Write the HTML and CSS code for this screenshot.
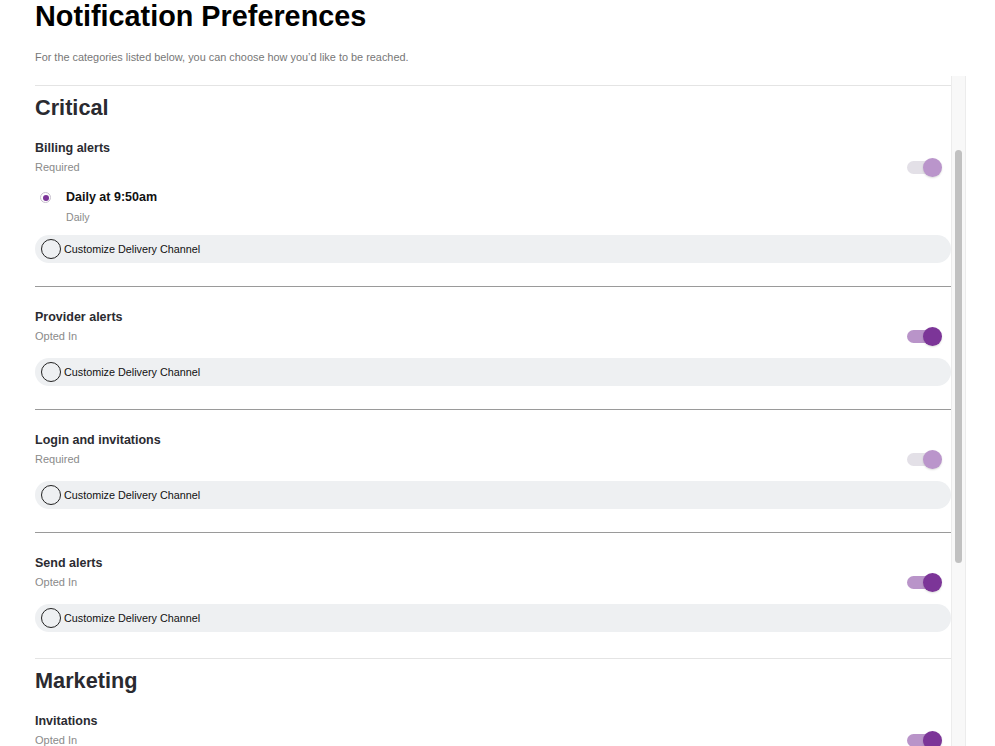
FILE: index.html
```html
<!DOCTYPE html>
<html lang="en">
<head>
    <meta charset="UTF-8">
    <meta name="viewport" content="width=device-width, initial-scale=1.0">
    <title>Notification Preferences</title>
    <link rel="stylesheet" href="styles.css">
</head>
<body>
    <h1>Notification Preferences</h1>
    <p class="intro">For the categories listed below, you can choose how you’d like to be reached.</p>

    <div class="panel">
        <div class="panel-body">
            <section class="category">
                <h2>Critical</h2>

                <div class="pref">
                    <div class="pref-head">
                        <div>
                            <div class="pref-title">Billing alerts</div>
                            <div class="pref-status">Required</div>
                        </div>
                        <span class="toggle disabled"><span class="toggle-thumb"></span></span>
                    </div>
                    <div class="schedule">
                        <span class="radio checked"></span>
                        <div>
                            <div class="schedule-title">Daily at 9:50am</div>
                            <div class="schedule-sub">Daily</div>
                        </div>
                    </div>
                    <div class="channel"><span class="channel-circle"></span>Customize Delivery Channel</div>
                </div>

                <div class="pref">
                    <div class="pref-head">
                        <div>
                            <div class="pref-title">Provider alerts</div>
                            <div class="pref-status">Opted In</div>
                        </div>
                        <span class="toggle"><span class="toggle-thumb"></span></span>
                    </div>
                    <div class="channel"><span class="channel-circle"></span>Customize Delivery Channel</div>
                </div>

                <div class="pref">
                    <div class="pref-head">
                        <div>
                            <div class="pref-title">Login and invitations</div>
                            <div class="pref-status">Required</div>
                        </div>
                        <span class="toggle disabled"><span class="toggle-thumb"></span></span>
                    </div>
                    <div class="channel"><span class="channel-circle"></span>Customize Delivery Channel</div>
                </div>

                <div class="pref">
                    <div class="pref-head">
                        <div>
                            <div class="pref-title">Send alerts</div>
                            <div class="pref-status">Opted In</div>
                        </div>
                        <span class="toggle"><span class="toggle-thumb"></span></span>
                    </div>
                    <div class="channel"><span class="channel-circle"></span>Customize Delivery Channel</div>
                </div>
            </section>

            <section class="category">
                <h2>Marketing</h2>

                <div class="pref">
                    <div class="pref-head">
                        <div>
                            <div class="pref-title">Invitations</div>
                            <div class="pref-status">Opted In</div>
                        </div>
                        <span class="toggle"><span class="toggle-thumb"></span></span>
                    </div>
                    <div class="channel"><span class="channel-circle"></span>Customize Delivery Channel</div>
                </div>
            </section>
        </div>
        <div class="scrollbar"><div class="scrollbar-thumb"></div></div>
    </div>
</body>
</html>
```

FILE: styles.css
```css
html, body {
    height: 100%;
}
body {
    font-family: "Liberation Sans", Arial, sans-serif;
    margin: 0;
    padding: 0 29px 0 35px;
    color: #2b2b31;
    background: #fff;
    overflow: hidden;
}
h1 {
    margin: 0;
    font-size: 28.8px;
    line-height: 32px;
    color: #000;
}
.intro {
    margin: 18px 0 0;
    font-size: 10.9px;
    line-height: 14px;
    color: #777;
}
.panel {
    display: flex;
    margin-top: 12px;
    height: 670px;
}
.panel-body {
    flex: 1;
    padding-top: 9px;
    overflow: hidden;
}
.category {
    border-top: 1px solid #e4e4e4;
    padding: 9px 0 3px;
}
h2 {
    margin: 0;
    font-size: 21.7px;
    line-height: 26px;
    color: #2a2a30;
}
.pref {
    border-top: 1px solid #9a9a9a;
    padding: 22px 0 23px;
}
.category h2 + .pref {
    border-top: none;
    padding-top: 19px;
}
.pref-head {
    display: flex;
    justify-content: space-between;
    align-items: flex-end;
}
.pref-title {
    font-size: 12.5px;
    line-height: 16px;
    font-weight: bold;
}
.pref-status {
    margin-top: 4px;
    font-size: 11px;
    line-height: 14px;
    color: #8a8a8a;
}
.toggle {
    position: relative;
    width: 35px;
    height: 14px;
    margin-right: 9px;
}
.toggle::before {
    content: "";
    display: block;
    width: 30px;
    height: 13px;
    margin-top: 1px;
    border-radius: 7px;
    background: #b994c9;
}
.toggle-thumb {
    position: absolute;
    top: -2px;
    right: 0;
    width: 19px;
    height: 19px;
    border-radius: 50%;
    background: #7c3598;
    box-shadow: 0 1px 2px rgba(0, 0, 0, 0.15);
}
.toggle.disabled::before {
    background: #e3e0e7;
}
.toggle.disabled .toggle-thumb {
    background: #ba95cb;
}
.schedule {
    display: flex;
    margin-top: 15px;
    padding-left: 5px;
}
.radio {
    width: 11px;
    height: 11px;
    margin: 3px 15px 0 0;
    box-sizing: border-box;
    border: 1.5px solid #c7bfcd;
    border-radius: 50%;
    display: flex;
    align-items: center;
    justify-content: center;
}
.radio.checked::after {
    content: "";
    width: 6px;
    height: 6px;
    border-radius: 50%;
    background: #7c3598;
}
.schedule-title {
    font-size: 12.5px;
    line-height: 16px;
    font-weight: bold;
    color: #111;
}
.schedule-sub {
    margin-top: 5px;
    font-size: 10.6px;
    line-height: 14px;
    color: #8a8a8a;
}
.channel {
    display: flex;
    align-items: center;
    gap: 3px;
    height: 28px;
    margin-top: 11px;
    padding-left: 6px;
    border-radius: 14px;
    background: #eef0f2;
    font-size: 10.8px;
    color: #111;
}
.pref-head + .channel {
    margin-top: 15px;
}
.channel-circle {
    width: 20px;
    height: 20px;
    box-sizing: border-box;
    border: 1.5px solid #222;
    border-radius: 50%;
}
.scrollbar {
    width: 15px;
    box-sizing: border-box;
    border-left: 1px solid #ececec;
    border-right: 1px solid #ececec;
    background: #f8f8f8;
    padding: 74px 3px 0 3px;
}
.scrollbar-thumb {
    height: 413px;
    border-radius: 4px;
    background: #c1c1c1;
}
```
